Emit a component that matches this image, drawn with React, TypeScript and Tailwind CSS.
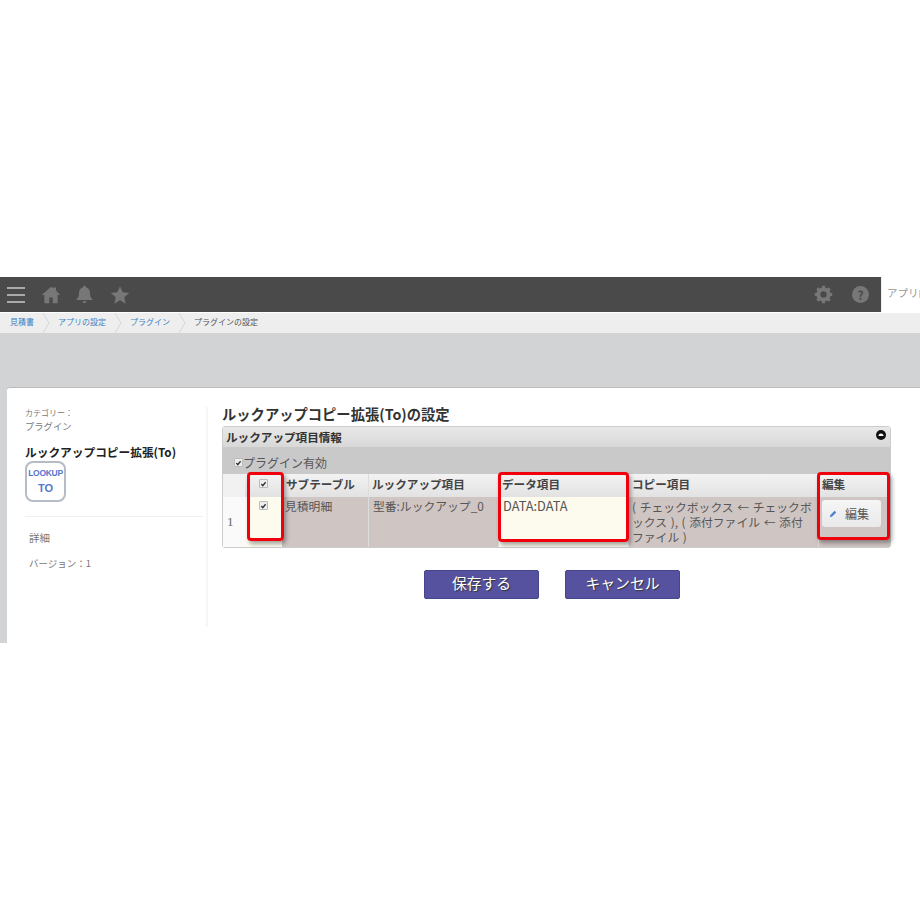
const crumbs = ["見積書", "アプリの設定", "プラグイン"];
const font = "font-['Noto_Sans_CJK_JP','Noto_Sans',sans-serif]";

const Check = () => (
  <span className="flex h-[9px] w-[9px] items-center justify-center rounded-[1px] border border-[#bbb] bg-[#eee]">
    <svg viewBox="0 0 10 10" className="h-[8px] w-[8px]">
      <path d="M2 5l2 2.5L8 2.5" fill="none" stroke="#333" strokeWidth="2" />
    </svg>
  </span>
);

const RedBox = ({ className }: { className: string }) => (
  <div className={`absolute rounded-[4px] border-[3px] border-[#f0000c] shadow-[2px_3px_4px_rgba(0,0,0,0.35)] ${className}`} />
);

const App = () => {
  return (
    <div className={`h-[920px] w-[920px] overflow-hidden bg-white pt-[277px] text-[#555] ${font}`}>
      <header className="flex h-[35px] bg-[#4a4a4a]">
        <div className="flex flex-1 items-center pl-[7px]">
          <div className="flex w-[18px] flex-col gap-[5px]">
            <span className="h-[2px] bg-[#aaa]" />
            <span className="h-[2px] bg-[#aaa]" />
            <span className="h-[2px] bg-[#aaa]" />
          </div>
          <svg viewBox="0 0 24 24" className="ml-[16px] h-[20px] w-[20px]">
            <path d="M12 2 1 12h3v10h6v-7h4v7h6V12h3l-5-5.500V3h-3v1z" fill="#777" />
          </svg>
          <svg viewBox="0 0 24 24" className="ml-[14px] h-[19px] w-[19px]">
            <path d="M12 1a2 2 0 0 1 2 2c4 1 5 4 5 8 0 4 2 6 3 7v1H2v-1c1-1 3-3 3-7 0-4 1-7 5-8a2 2 0 0 1 2-2zM9.500 20.500h5a2.500 2.500 0 0 1-5 0z" fill="#777" />
          </svg>
          <svg viewBox="0 0 24 24" className="ml-[16px] h-[20px] w-[20px]">
            <path d="M12 1.500l3.200 7.300 7.800.7-5.900 5.200 1.800 7.800L12 18.300 5.100 22.500l1.800-7.800L1 9.500l7.800-.7z" fill="#777" />
          </svg>
          <svg viewBox="0 0 24 24" className="ml-auto h-[19px] w-[19px]">
            <circle cx="12" cy="12" r="6.500" fill="none" stroke="#777" strokeWidth="5" />
            <path d="M12 1v4M12 19v4M1 12h4M19 12h4M4.200 4.200l3 3M16.800 16.800l3 3M19.800 4.200l-3 3M7.200 16.800l-3 3" stroke="#777" strokeWidth="4" />
          </svg>
          <span className="ml-[19px] mr-[12px] flex h-[17px] w-[17px] items-center justify-center rounded-full bg-[#777] text-[12px] font-bold text-[#4a4a4a]">?</span>
        </div>
        <input
          placeholder="アプリ内検索"
          className="w-[39px] border-l border-[#eee] bg-white pb-[3px] pl-[5px] text-[10.5px] outline-none placeholder:text-[#999]"
        />
      </header>
      <nav className="mt-px flex h-[20px] items-center bg-[#eee] pl-[10px] text-[8px]">
        {crumbs.map((c) => (
          <div key={c} className="flex items-center">
            <span className="pb-[3px] text-[#3f7ec2]">{c}</span>
            <svg viewBox="0 0 8 20" className="mx-[8px] h-[20px] w-[8px]">
              <path d="M1 0l6 10-6 10" fill="none" stroke="#d8d8d8" />
            </svg>
          </div>
        ))}
        <span className="pb-[3px] text-[#555]">プラグインの設定</span>
      </nav>
      <div className="h-[310px] bg-[#d2d3d5] pl-[7px] pt-[54px]">
        <div className="flex h-[256px] rounded-tl-[3px] border-t border-[#bbb] bg-white pl-[18px] pt-[19px]">
          <aside className="w-[178px] text-[#777]">
            <div className="text-[8px] leading-[11px]">カテゴリー：</div>
            <div className="mt-[2px] text-[9.300px] leading-[13px]">プラグイン</div>
            <div className="mt-[10px] text-[11.700px] font-bold leading-[17px] text-[#222]">ルックアップコピー拡張(To)</div>
            <div className="mt-[1px] flex h-[41px] w-[41px] flex-col items-center rounded-[8px] border-2 border-[#b5bcc6] font-['Liberation_Sans',sans-serif] font-bold text-[#5577cc]">
              <span className="mt-[5px] text-[8.500px] leading-[10px] tracking-[-0.3px]">LOOKUP</span>
              <span className="mt-[4px] text-[11px] leading-[12px]">TO</span>
            </div>
            <div className="mt-[14px] border-t border-[#f0f0f0] pl-[4px] pt-[14px]">
              <div className="text-[10.500px] leading-[14px]">詳細</div>
              <div className="mt-[12px] text-[9.500px] leading-[12px]">バージョン：1</div>
            </div>
          </aside>
          <div className="ml-[3px] mb-[16px] w-[2px] bg-[#f6f6f6]" />
          <main className="ml-[14px] w-[669px]">
            <h1 className="mt-[-5px] text-[14.300px] font-bold leading-[24px] text-[#333]">ルックアップコピー拡張(To)の設定</h1>
            <div className="relative h-[122px] rounded-[3px] border border-[#ccc]">
              <div className="flex h-[20px] justify-between bg-gradient-to-b from-[#e8e8e8] to-[#d8d8d8] pl-[3px] pr-[4px] text-[11.600px] font-bold leading-[20px] text-[#333]">
                <span>ルックアップ項目情報</span>
                <svg viewBox="0 0 10 10" className="mt-[3px] h-[10px] w-[10px]">
                  <circle cx="5" cy="5" r="5" fill="#111" />
                  <path d="M2.500 6a2.500 2.500 0 0 1 5 0z" fill="#fff" />
                </svg>
              </div>
              <div className="flex h-[27px] items-center bg-[#c9c9c9] pl-[11px] pt-[4px] text-[12px] text-[#555]">
                <Check />
                <span>プラグイン有効</span>
              </div>
              <div className="grid h-[73px] grid-cols-[22px_37px_86px_130px_130px_190px_72px] grid-rows-[23px_50px] text-[11.800px]">
                <div className="bg-[#f1f1f1]" />
                <div className="flex items-start justify-center bg-gradient-to-b from-[#f3f3f3] to-[#e2e2e2] pt-[5px]"><Check /></div>
                {["サブテーブル", "ルックアップ項目", "データ項目", "コピー項目", "編集"].map((h) => (
                  <div key={h} className="border-l border-[#ddd] bg-gradient-to-b from-[#f3f3f3] to-[#e2e2e2] pl-[3px] pt-[1px] text-[11.600px] font-bold leading-[18px] text-[#444]">{h}</div>
                ))}
                <div className="bg-[#fafafa] pl-[4px] pt-[15px] font-['Liberation_Serif',serif] text-[13px] text-[#666]">1</div>
                <div className="flex justify-center bg-[#fdfbee] pt-[4px]"><Check /></div>
                <div className="bg-[#cfc5c3] pl-[3px] leading-[18px]">見積明細</div>
                <div className="border-l border-[#ddd] bg-[#cfc5c3] pl-[4px] leading-[18px]">型番:ルックアップ_0</div>
                <div className="border-l border-[#ddd] bg-[#fdfbee] pl-[4px] text-[12.800px] leading-[18px]">DATA:DATA</div>
                <div className="whitespace-nowrap border-l border-[#ddd] bg-[#cfc5c3] pl-[3px] pt-[2px] leading-[15px] [word-spacing:1px]">
                  ( チェックボックス ← チェックボ
                  <br />
                  ックス ), ( 添付ファイル ← 添付
                  <br />
                  ファイル )
                </div>
                <div className="border-l border-[#ddd] bg-[#cfc5c3] pl-[3px] pt-[3px]">
                  <button className="flex h-[27px] w-[59px] items-center rounded-[3px] bg-gradient-to-b from-[#f6f6f6] to-[#e9e9e9] pl-[7px] text-[12px] text-[#555]">
                    <svg viewBox="0 0 10 10" className="h-[8px] w-[8px]">
                      <path d="M1 9l1-3 5-5 2 2-5 5z" fill="#4a7fd0" />
                    </svg>
                    <span className="ml-[8px]">編集</span>
                  </button>
                </div>
              </div>
              <RedBox className="left-[24px] top-[45px] h-[69px] w-[37px]" />
              <RedBox className="left-[275px] top-[45px] h-[70px] w-[131px]" />
              <RedBox className="left-[594px] top-[45px] h-[68px] w-[73px]" />
            </div>
            <div className="mt-[22px] flex gap-[26px] pl-[202px]">
              <button className="h-[29px] w-[115px] rounded-[2px] border border-[#46468c] bg-[#56529f] pb-[3px] text-[14.800px] text-white [text-shadow:1px_1px_1px_#333]">保存する</button>
              <button className="h-[29px] w-[115px] rounded-[2px] border border-[#46468c] bg-[#56529f] pb-[3px] text-[14.800px] text-white [text-shadow:1px_1px_1px_#333]">キャンセル</button>
            </div>
          </main>
        </div>
      </div>
    </div>
  );
};

export default App;
